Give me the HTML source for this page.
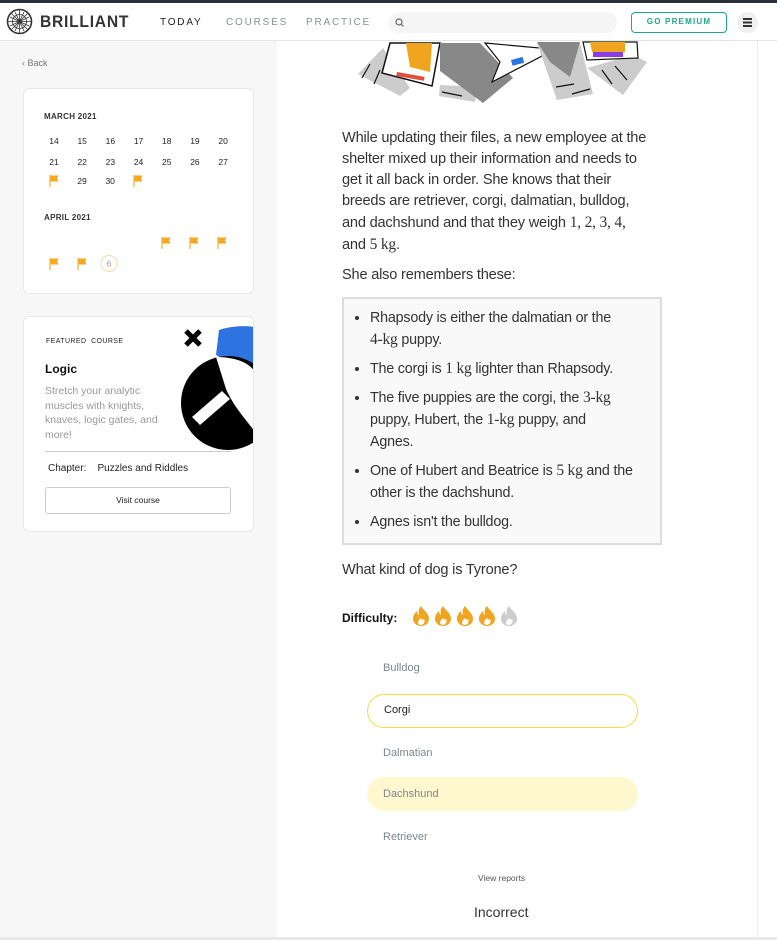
<!DOCTYPE html>
<html><head><meta charset="utf-8"><style>
*{box-sizing:border-box;margin:0;padding:0}
body{width:777px;height:940px;overflow:hidden;background:#f7f7f7;font-family:"Liberation Sans",sans-serif;color:#222;position:relative}
.topbar{position:absolute;left:0;top:0;width:777px;height:3px;background:#2b2f3a}
.header{position:absolute;left:0;top:3px;width:777px;height:38px;background:#fff;border-bottom:1px solid #e6e6e6}
.main{position:absolute;left:277px;top:41px;width:481px;height:896px;background:#fff;border-right:1px solid #eee}
.right{position:absolute;left:758px;top:41px;width:19px;height:896px;background:#fff}
.bottom{position:absolute;left:0;top:937px;width:777px;height:3px;background:#e8e8e8}
.abs{position:absolute}
.nav{font-size:10px;letter-spacing:1.8px;color:#8a8f98}
.card{position:absolute;background:#fff;border:1px solid #e8e8e8;border-radius:6px}
.cal{font-size:8.5px;color:#222;text-align:center;width:20px}
.p{font-size:14.6px;line-height:21px;color:#333;white-space:nowrap;letter-spacing:-0.2px}
.s{font-family:'Liberation Serif',serif;font-size:15.5px}
.opt{position:absolute;left:367px;width:271px;height:34px;border-radius:17px;font-size:11px;color:#7d8590;padding-left:16px;line-height:34px}
ul.p li{line-height:22px;margin-bottom:7px}
</style></head><body>
<div class="topbar"></div>
<div class="header">
  <svg class="abs" style="left:6px;top:5px" width="27" height="27" viewBox="0 0 27 27"><circle cx="13.5" cy="13.5" r="12" fill="none" stroke="#333" stroke-width="1.6"/><g stroke="#333" stroke-width=".8" fill="none"><circle cx="13.5" cy="13.5" r="7"/><path d="M1.5 13.5h24M13.5 1.5v24M5 5l17 17M22 5L5 22M4 9l19 9M4 18l19-9M9 4l9 19M18 4L9 23"/></g></svg>
  <div class="abs" style="left:40px;top:9px;font-size:17px;letter-spacing:.8px;color:#333;font-weight:bold;transform:scaleX(.92);transform-origin:left">BRILLIANT</div>
  <div class="abs nav" style="left:160px;top:14px;color:#222">TODAY</div>
  <div class="abs nav" style="left:226px;top:14px">COURSES</div>
  <div class="abs nav" style="left:306px;top:14px">PRACTICE</div>
  <div class="abs" style="left:388px;top:9px;width:229px;height:21px;background:#f5f5f5;border-radius:11px"></div>
  <svg class="abs" style="left:395px;top:15px" width="9" height="9" viewBox="0 0 9 9"><circle cx="4" cy="4" r="3" fill="none" stroke="#666" stroke-width="1.2"/><path d="M6 6l2.5 2.5" stroke="#666" stroke-width="1.2"/></svg>
  <div class="abs" style="left:631px;top:9px;width:96px;height:21px;border:1.5px solid #1fa58a;border-radius:4px;font-size:8px;font-weight:bold;letter-spacing:1.2px;color:#1fa58a;text-align:center;line-height:18px">GO PREMIUM</div>
  <div class="abs" style="left:737px;top:9px;width:21px;height:21px;border-radius:50%;background:#f0f0f0"></div>
  <div class="abs" style="left:743px;top:15px;width:9px;height:1.5px;background:#333;box-shadow:0 3.5px 0 #333,0 7px 0 #333"></div>
</div>
<div class="main"></div><div class="right"></div><div class="bottom"></div>

<div class="abs" style="left:22px;top:58px;font-size:9px;color:#777">‹ Back</div>

<div class="card" style="left:23px;top:88px;width:231px;height:206px"></div>
<div class="abs" style="left:44px;top:112px;font-size:8px;font-weight:bold;letter-spacing:.3px;color:#333">MARCH 2021</div>
<div class="abs" style="left:44px;top:136px;display:flex;gap:8.2px">
<div class="cal">14</div><div class="cal">15</div><div class="cal">16</div><div class="cal">17</div><div class="cal">18</div><div class="cal">19</div><div class="cal">20</div></div>
<div class="abs" style="left:44px;top:157px;display:flex;gap:8.2px">
<div class="cal">21</div><div class="cal">22</div><div class="cal">23</div><div class="cal">24</div><div class="cal">25</div><div class="cal">26</div><div class="cal">27</div></div>
<div class="abs" style="left:72px;top:176px;display:flex;gap:8.2px"><div class="cal">29</div><div class="cal">30</div></div>
<div class="abs" style="left:44px;top:213px;font-size:8px;font-weight:bold;letter-spacing:.3px;color:#333">APRIL 2021</div>
<svg class="abs" style="left:0;top:0" width="277" height="280">
<defs><g id="f"><path d="M0 0v12" stroke="#f9c04a" stroke-width="1.5"/><path d="M0.5 0.5h8l-1.5 3 1.5 3h-8z" fill="#f5a623"/></g></defs>
<use href="#f" x="50" y="175"/><use href="#f" x="134" y="175"/>
<use href="#f" x="162" y="237"/><use href="#f" x="190" y="237"/><use href="#f" x="218" y="237"/>
<use href="#f" x="50" y="258"/><use href="#f" x="78" y="258"/>
<circle cx="109" cy="263.5" r="8" fill="none" stroke="#f8d9a8" stroke-width="1"/>
<text x="109" y="266.5" font-size="8" text-anchor="middle" fill="#999" font-family="Liberation Sans">6</text>
</svg>

<div class="card" style="left:23px;top:316px;width:231px;height:216px;overflow:hidden">
<svg class="abs" style="left:150px;top:0" width="81" height="140" viewBox="0 0 81 140">
<path d="M45 13 A80 80 0 0 1 81 10 L81 60 L42 38 Z" fill="#2f73e0"/>
<circle cx="54" cy="86" r="47" fill="#000"/>
<path d="M42 40 C60 40 75 45 81 55 L81 115 C70 100 60 90 52 72 Z" fill="#fff"/>
<path d="M18 100 L48 74 L56 82 L26 108 Z" fill="#fff"/>
<path d="M12 14l14 14M26 14L12 28" stroke="#000" stroke-width="5"/>
</svg>
</div>
<div class="abs" style="left:46px;top:338px;font-size:7px;letter-spacing:.4px;color:#222">FEATURED&nbsp; COURSE</div>
<div class="abs" style="left:45px;top:362px;font-size:12px;font-weight:bold;color:#111">Logic</div>
<div class="abs" style="left:45px;top:384px;width:120px;font-size:10.5px;line-height:14.6px;color:#999">Stretch your analytic muscles with knights, knaves, logic gates, and more!</div>
<div class="abs" style="left:45px;top:451px;width:186px;height:1px;background:#ccc"></div>
<div class="abs" style="left:48px;top:463px;font-size:10px;color:#222">Chapter:&nbsp;&nbsp;&nbsp; Puzzles and Riddles</div>
<div class="abs" style="left:45px;top:487px;width:186px;height:27px;border:1px solid #ccc;border-radius:3px;font-size:8.5px;text-align:center;line-height:25px;color:#222">Visit course</div>

<svg class="abs" style="left:340px;top:41px" width="330" height="66" viewBox="0 -1 330 66">
<polygon points="18,32 43,6 70,46 60,54" fill="#ccc"/>
<polygon points="50,1 100,1 92,44 42,31" fill="#fff" stroke="#111" stroke-width="1.5"/>
<polygon points="66,1 92,1 90,30 70,25" fill="#f0a520"/>
<rect x="57" y="30" width="28" height="4" fill="#e0503c" transform="rotate(10 57 30)"/>
<polygon points="100,43 137,45 135,60 99,54" fill="#ccc"/>
<polygon points="100,1 140,1 173,36 143,61 100,29" fill="#888"/>
<polygon points="145,1 200,6 202,14 152,40 160,20" fill="#fff" stroke="#111" stroke-width="1.2"/>
<rect x="171" y="18" width="12" height="6" fill="#2f73e0" transform="rotate(-15 171 18)"/>
<polygon points="197,1 240,1 253,52 217,58" fill="#ccc"/>
<polygon points="197,0 240,0 230,35 210,20" fill="#888"/>
<polygon points="247,26 283,53 307,20 293,13" fill="#ccc"/>
<polygon points="243,0 297,0 298,16 247,18" fill="#fff" stroke="#111" stroke-width="1.2"/>
<polygon points="250,0 285,0 285,10 252,10" fill="#f0a520"/>
<rect x="253" y="10" width="30" height="5" fill="#8b3be8"/>
<path d="M30 22l-8 14M40 28l-6 14M102 50l20 4M216 45l18-3M232 52l18-5M262 28l10 14M275 24l12 14" stroke="#111" stroke-width="1.2"/>
</svg>

<div class="abs p" style="left:342px;top:128px">While updating their files, a new employee at the<br>shelter mixed up their information and needs to<br>get it all back in order. She knows that their<br>breeds are retriever, corgi, dalmatian, bulldog,<br>and dachshund and that they weigh <span class="s">1, 2, 3, 4,</span><br>and <span class="s">5 kg</span>.</div>
<div class="abs p" style="left:342px;top:265px">She also remembers these:</div>
<div class="abs" style="left:342px;top:297px;width:320px;height:248px;background:#f9f9f9;border:2px solid #ddd"></div>
<ul class="abs p" style="left:370px;top:307px;list-style:disc;font-size:14.3px">
<li>Rhapsody is either the dalmatian or the<br><span class="s">4-kg</span> puppy.</li>
<li>The corgi is <span class="s">1 kg</span> lighter than Rhapsody.</li>
<li>The five puppies are the corgi, the <span class="s">3-kg</span><br>puppy, Hubert, the <span class="s">1-kg</span> puppy, and<br>Agnes.</li>
<li>One of Hubert and Beatrice is <span class="s">5 kg</span> and the<br>other is the dachshund.</li>
<li>Agnes isn't the bulldog.</li>
</ul>
<div class="abs p" style="left:342px;top:560px">What kind of dog is Tyrone?</div>
<div class="abs" style="left:342px;top:611px;font-size:12px;font-weight:bold;color:#111">Difficulty:</div>
<svg class="abs" style="left:412px;top:605px" width="110" height="22" viewBox="0 0 110 22">
<defs><path id="fl" d="M9 1 C11 5 17 8 17 14 A8 7 0 0 1 1 14 C1 10 3 8 5 6 C5 9 6 10 7 10 C6 6 7 3 9 1Z M9 20 A4 4 0 0 0 12 14 C11 15 10 15 9 13 C7 15 6 16 6 18 A3 3 0 0 0 9 20Z" fill-rule="evenodd"/></defs>
<use href="#fl" x="0" fill="#f0a520"/><use href="#fl" x="22" fill="#f0a520"/><use href="#fl" x="44" fill="#f0a520"/><use href="#fl" x="66" fill="#f0a520"/><use href="#fl" x="88" fill="#ccc"/>
</svg>
<div class="opt" style="top:651px">Bulldog</div>
<div class="opt" style="top:694px;border:1.5px solid #f7dc3c;color:#222;line-height:31px">Corgi</div>
<div class="opt" style="top:736px">Dalmatian</div>
<div class="opt" style="top:777px;background:#fff8cf">Dachshund</div>
<div class="opt" style="top:820px">Retriever</div>
<div class="abs" style="left:478px;top:873px;font-size:8.5px;color:#555">View reports</div>
<div class="abs" style="left:474px;top:904px;font-size:14px;color:#333">Incorrect</div>
</body></html>
